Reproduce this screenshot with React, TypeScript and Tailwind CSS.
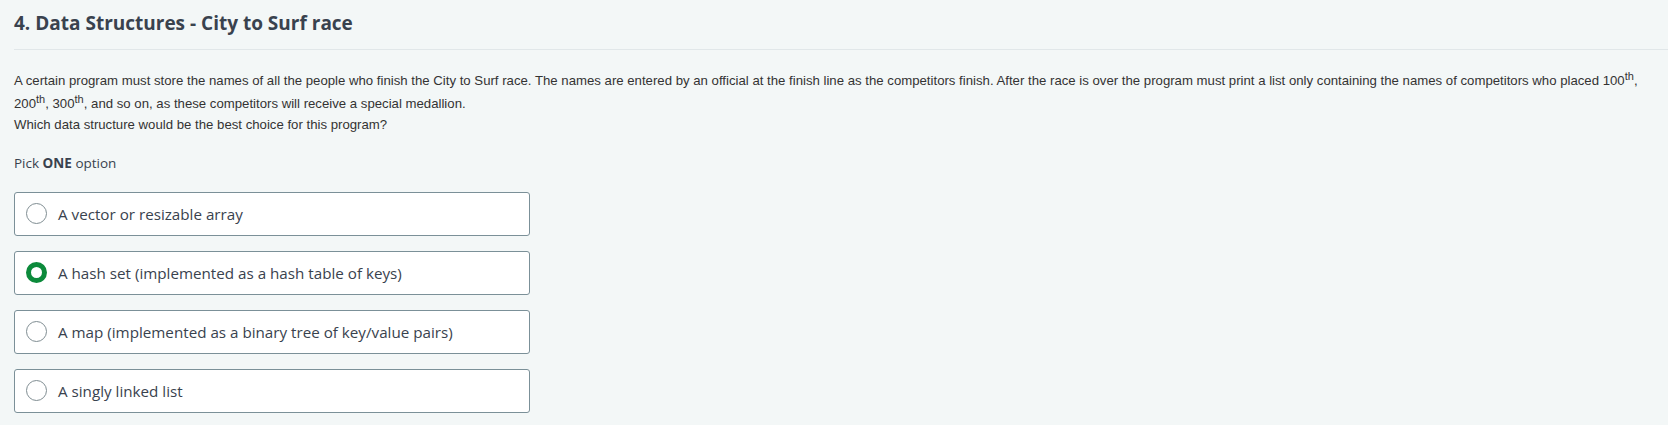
import React, { useState } from 'react';

const options = [
  'A vector or resizable array',
  'A hash set (implemented as a hash table of keys)',
  'A map (implemented as a binary tree of key/value pairs)',
  'A singly linked list',
];

function Th() {
  return <span className="align-super text-[11px] leading-[16px]">th</span>;
}

function App() {
  const [selected, setSelected] = useState(1);

  return (
    <div className="min-h-screen bg-[#f3f7f7] pl-[14px] text-[#39424e]">
      {/* Question header */}
      <div className="border-b border-[#e1e7e9] pt-[9px] pb-[12px]">
        <h1 className="font-['Open_Sans',sans-serif] text-[19px] leading-[28px] font-bold">
          4. Data Structures - City to Surf race
        </h1>
      </div>

      {/* Question body */}
      <p className="mt-[18px] pr-[14px] font-['Liberation_Sans',Arial,sans-serif] text-[13.2px] leading-[20px] text-[#333]">
        A certain program must store the names of all the people who finish the City to Surf race. The names are
        entered by an official at the finish line as the competitors finish. After the race is over the program must
        print a list only containing the names of competitors who placed 100<Th />, 200<Th />, 300<Th />, and so on, as
        these competitors will receive a special medallion.
        <br />
        Which data structure would be the best choice for this program?
      </p>

      <div className="mt-[18px] font-['Open_Sans',sans-serif] text-[13.5px] leading-[20px]">
        Pick <span className="font-bold">ONE</span> option
      </div>

      {/* Options */}
      <div className="mt-[19px] flex w-[516px] flex-col gap-[15px] font-['Open_Sans',sans-serif]">
        {options.map((opt, i) => (
          <label
            key={opt}
            onClick={() => setSelected(i)}
            className="flex h-[44px] cursor-pointer items-center gap-[11px] rounded-[3px] border border-[#7b9098] bg-white pl-[11px]"
          >
            {selected === i ? (
              <span className="h-[21px] w-[21px] shrink-0 rounded-full border-[5px] border-[#0c8a3b] bg-white" />
            ) : (
              <span className="h-[21px] w-[21px] shrink-0 rounded-full border border-[#7f8d92] bg-white" />
            )}
            <span className="text-[15.2px] leading-[20px] text-[#39424e]">{opt}</span>
          </label>
        ))}
      </div>
    </div>
  );
}

export default App;
